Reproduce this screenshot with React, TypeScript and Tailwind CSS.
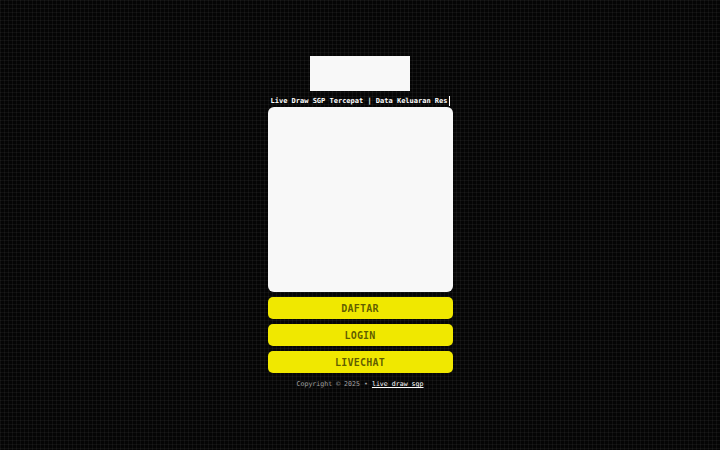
export default function App() {
  const buttons = ['DAFTAR', 'LOGIN', 'LIVECHAT'];

  return (
    <div className="min-h-screen w-full bg-[#050505] bg-[linear-gradient(rgba(255,255,255,0.045)_1px,transparent_1px),linear-gradient(90deg,rgba(255,255,255,0.045)_1px,transparent_1px)] bg-[size:4px_4px] font-['DejaVu_Sans_Mono',monospace]">
      <div className="flex flex-col items-center pt-[56px]">
        <div className="w-[100px] h-[35px] bg-[#f8f8f8]" />

        <div className="w-[185px] mt-[5px] flex justify-center">
          <div className="whitespace-nowrap text-[7px] leading-[10px] font-bold text-white border-r border-white pr-[1px]">
            Live Draw SGP Tercepat | Data Keluaran Res
          </div>
        </div>

        <div className="w-[185px] h-[185px] mt-[1px] rounded-[6px] bg-[#f8f8f8]" />

        <div className="w-[185px] mt-[5px] flex flex-col gap-[5px]">
          {buttons.map((label) => (
            <button
              key={label}
              className="h-[22px] w-full rounded-[5px] bg-[#f0e800] text-[10px] font-bold text-[rgba(0,0,0,0.62)] tracking-[0.2px]"
            >
              {label}
            </button>
          ))}
        </div>

        <p className="mt-[6px] text-[6.6px] leading-[10px] text-[#a0a0a0]">
          Copyright © 2025 •{' '}
          <a href="#" className="text-white underline">
            live draw sgp
          </a>
        </p>
      </div>
    </div>
  );
}
